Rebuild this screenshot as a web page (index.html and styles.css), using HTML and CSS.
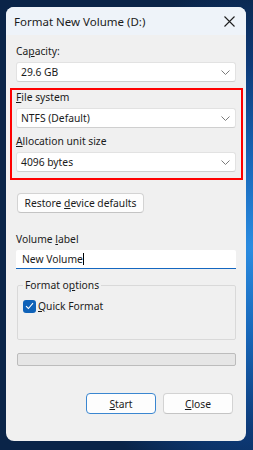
FILE: index.html
```html
<!DOCTYPE html>
<html lang="en">
<head>
  <meta charset="UTF-8" />
  <meta name="viewport" content="width=device-width, initial-scale=1.0" />
  <title>Format New Volume (D:)</title>
  <link rel="stylesheet" href="styles.css">
</head>
<body>

  <!-- Format dialog -->
  <div class="dialog">
    <div class="titlebar">
      <span class="title">Format New Volume (D:)</span>
      <svg class="close-icon" width="11" height="11" viewBox="0 0 11 11">
        <path d="M0.5 0.5 L10.5 10.5 M10.5 0.5 L0.5 10.5" stroke="#1f1f1f" stroke-width="1.1" fill="none" />
      </svg>
    </div>

    <div class="content">
      <div class="label first">Ca<u>p</u>acity:</div>
      <div class="select">
        <span>29.6 GB</span>
        <svg class="chevron" width="9" height="5" viewBox="0 0 9 5"><path d="M0.5 0.5 L4.5 4.5 L8.5 0.5" stroke="#7a7a7a" fill="none" /></svg>
      </div>

      <!-- Highlighted section -->
      <div class="highlight">
        <div class="label"><u>F</u>ile system</div>
        <div class="select">
          <span>NTFS (Default)</span>
          <svg class="chevron" width="9" height="5" viewBox="0 0 9 5"><path d="M0.5 0.5 L4.5 4.5 L8.5 0.5" stroke="#7a7a7a" fill="none" /></svg>
        </div>
        <div class="label spaced"><u>A</u>llocation unit size</div>
        <div class="select">
          <span>4096 bytes</span>
          <svg class="chevron" width="9" height="5" viewBox="0 0 9 5"><path d="M0.5 0.5 L4.5 4.5 L8.5 0.5" stroke="#7a7a7a" fill="none" /></svg>
        </div>
      </div>

      <button class="btn restore">Restore <u>d</u>evice defaults</button>

      <div class="label volume">Volume <u>l</u>abel</div>
      <div class="text-input">New Volume<span class="caret"></span></div>

      <fieldset class="group">
        <legend>Format o<u>p</u>tions</legend>
        <div class="check-row">
          <span class="checkbox">
            <svg width="9" height="8" viewBox="0 0 9 8"><path d="M1 4.2 L3.4 6.5 L8 1.2" stroke="#ffffff" stroke-width="1.1" fill="none" /></svg>
          </span>
          <span><u>Q</u>uick Format</span>
        </div>
      </fieldset>

      <div class="progress"></div>

      <div class="actions">
        <button class="btn start"><u>S</u>tart</button>
        <button class="btn"><u>C</u>lose</button>
      </div>
    </div>
  </div>

</body>
</html>
```

FILE: styles.css
```css
body {
  margin: 0;
  width: 253px;
  height: 450px;
  box-sizing: border-box;
  padding: 7px 7px 0 6px;
  overflow: hidden;
  background: radial-gradient(ellipse 90% 70% at 100% 55%, #2b8de2 0%, #1766b8 28%, #0d3a78 58%, #0a2448 85%);
  font-family: "Noto Sans", "Open Sans", sans-serif;
  color: #1b1b1b;
}

.dialog {
  width: 240px;
  height: 434px;
  background-color: #f0f0f0;
  border-radius: 8px;
  overflow: hidden;
}

.titlebar {
  height: 28px;
  background-color: #eef3f9;
  display: flex;
  align-items: center;
  justify-content: space-between;
  padding: 0 11px 0 8px;
}

.title {
  font-size: 11.5px;
  padding-top: 1px;
}

.close-icon {
  margin-top: 1px;
}

.content {
  padding: 0 10px;
  font-size: 10.3px;
}

.label {
  line-height: 14px;
  margin-bottom: 4px;
}

.label.first {
  margin-top: 9px;
}

.label.spaced {
  margin-top: 6px;
}

.label.volume {
  margin-top: 19px;
}

.select {
  height: 20px;
  box-sizing: border-box;
  background-color: #ffffff;
  border: 1px solid #e2e2e2;
  border-bottom-color: #cfcfcf;
  border-radius: 3px;
  display: flex;
  align-items: center;
  justify-content: space-between;
  padding: 0 5px 0 4px;
}

.highlight {
  margin: 6px -7px 0 -6px;
  border: 2px solid #ff0000;
  padding: 0 5px 6px 4px;
}

.btn {
  font-family: inherit;
  font-size: 10.3px;
  color: #1b1b1b;
  background-color: #fdfdfd;
  border: 1px solid #d3d3d3;
  border-bottom-color: #c4c4c4;
  border-radius: 4px;
  padding: 0;
  height: 21px;
}

.restore {
  display: block;
  margin: 13px 0 0 1px;
  width: 127px;
  height: 20px;
}

.text-input {
  height: 19px;
  box-sizing: border-box;
  background-color: #ffffff;
  border-bottom: 1.5px solid #1467c0;
  border-radius: 2px 2px 0 0;
  padding: 0 0 0 6px;
  display: flex;
  align-items: center;
}

.caret {
  display: inline-block;
  width: 1px;
  height: 12px;
  background-color: #000000;
}

.group {
  margin: 9px 0 0 1px;
  border: 1px solid #d9d9d9;
  border-radius: 2px;
  padding: 7px 5px 26px 5px;
}

.group legend {
  padding: 0 2px;
  line-height: 14px;
}

.check-row {
  display: flex;
  align-items: center;
  gap: 2px;
  line-height: 14px;
}

.checkbox {
  width: 13px;
  height: 13px;
  background-color: #0f62b8;
  border-radius: 3px;
  display: flex;
  align-items: center;
  justify-content: center;
}

.progress {
  margin: 13px 0 0 1px;
  height: 13px;
  box-sizing: border-box;
  background-color: #e6e6e6;
  border: 1px solid #bcbcbc;
  border-radius: 2px;
}

.actions {
  display: flex;
  justify-content: flex-end;
  gap: 7px;
  margin-top: 27px;
  padding-right: 3px;
}

.actions .btn {
  width: 70px;
}

.btn.start {
  border-color: #3a86d0;
}
```
